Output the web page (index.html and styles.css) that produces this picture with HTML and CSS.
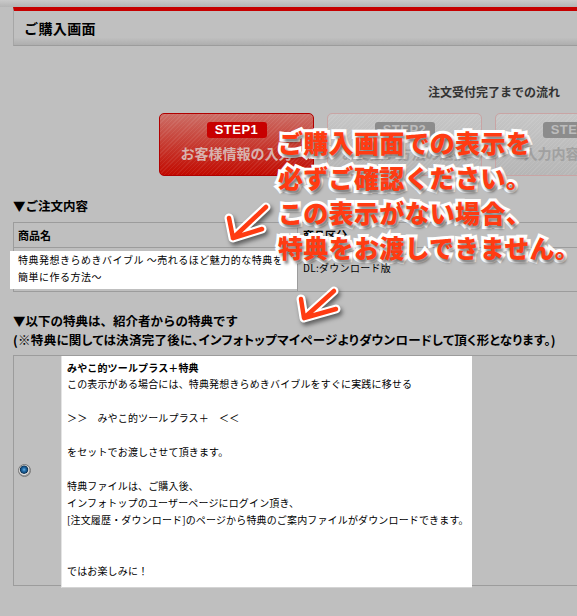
FILE: index.html
```html
<!DOCTYPE html>
<html lang="ja">
<head>
<meta charset="utf-8">
<title>ご購入画面</title>
<link rel="stylesheet" href="styles.css">
</head>
<body>
<div class="page">
  <div class="topbar"></div>
  <div class="main">
    <div class="header"><h1>ご購入画面</h1></div>
    <p class="flow-title">注文受付完了までの流れ</p>
    <div class="steps">
      <div class="step active"><span class="pill">STEP1</span><span class="label">お客様情報の入力</span></div>
      <div class="step"><span class="pill">STEP2</span><span class="label">お支払い方法の選択</span></div>
      <div class="step"><span class="pill">STEP3</span><span class="label">入力内容の確認</span></div>
    </div>

    <h2 class="sec sec-order">▼ご注文内容</h2>
    <div class="order">
      <div class="cell th">商品名</div>
      <div class="cell th th2">商品区分</div>
      <div class="cell name"><div class="name-box">特典発想きらめきバイブル ～売れるほど魅力的な特典を<br>簡単に作る方法～</div></div>
      <div class="cell kind">DL:ダウンロード版</div>
    </div>

    <h2 class="sec sec-bonus">▼以下の特典は、紹介者からの特典です<br><span class="sub">(※特典に関しては決済完了後に、インフォトップマイページよりダウンロードして頂く形となります。)</span></h2>
    <div class="bonus">
      <div class="radio-cell"><span class="radio"></span></div>
      <div class="bonus-box">
        <p class="bonus-title">みやこ的ツールプラス＋特典</p>
        <p class="bonus-text">この表示がある場合には、特典発想きらめきバイブルをすぐに実践に移せる<br><br>＞＞　みやこ的ツールプラス＋　＜＜<br><br>をセットでお渡しさせて頂きます。<br><br>特典ファイルは、ご購入後、<br>インフォトップのユーザーページにログイン頂き、<br>[注文履歴・ダウンロード]のページから特典のご案内ファイルがダウンロードできます。<br><br><br>ではお楽しみに！</p>
      </div>
      <div class="bonus-rest"></div>
    </div>
  </div>

  <div class="notice">ご購入画面での表示を<br>必ずご確認ください。<br>この表示がない場合、<br>特典をお渡しできません。</div>

  <svg class="arrows" width="577" height="616" viewBox="0 0 577 616">
    <path class="arrow-outline" d="M266 207 L233 238 M229 218 L233 238 L262 229"/>
    <path class="arrow-outline" d="M334 291 L304 318 M301 299 L304 318 L336 309"/>
    <path class="arrow-fill" d="M266 207 L233 238 M229 218 L233 238 L262 229"/>
    <path class="arrow-fill" d="M334 291 L304 318 M301 299 L304 318 L336 309"/>
  </svg>
</div>
</body>
</html>
```

FILE: styles.css
```css
* { box-sizing: border-box; margin: 0; padding: 0; }
html, body { overflow: hidden; }
body {
  background: #bfbfbf;
  font-family: "Noto Sans CJK JP", "Noto Sans", sans-serif;
  color: #000;
}
.page { position: relative; width: 577px; height: 616px; overflow: hidden; }

.topbar { height: 7px; background: linear-gradient(#cacaca, #b4b4b4); }
.main { padding-left: 13px; }

.header {
  height: 39px;
  border-top: 4px solid #c60000;
  border-left: 1px solid #a6a6a6;
  border-bottom: 1px solid #9c9c9c;
  background: linear-gradient(to bottom, #c0c0c0 0, #c0c0c0 78%, #aeaeae 100%);
}
.header h1 {
  font-size: 14px;
  font-weight: 700;
  line-height: 34px;
  padding-left: 10px;
  letter-spacing: 0.4px;
}

.flow-title {
  margin-top: 38px;
  font-size: 12px;
  font-weight: 700;
  line-height: 16px;
  color: #333;
  text-align: right;
  padding-right: 17px;
}

.steps { display: flex; gap: 13px; margin-top: 13px; padding-left: 146px; }
.step {
  flex: 0 0 155px;
  height: 63px;
  border-radius: 5px;
  border: 1px solid #c9a4a4;
  display: flex;
  flex-direction: column;
  align-items: center;
  background:
    repeating-linear-gradient(-45deg, rgba(255,255,255,0.08) 0 1px, transparent 1px 3px),
    linear-gradient(#c6c6c6, #b6b6b6);
}
.step .pill {
  margin-top: 8px;
  width: 60px;
  height: 16px;
  border-radius: 3px;
  background: #8c8c8c;
  color: #bdbdbd;
  font-family: "Liberation Sans", Arial, sans-serif;
  font-weight: 700;
  font-size: 13px;
  line-height: 16px;
  text-align: center;
  letter-spacing: 0.5px;
}
.step .label {
  margin-top: 6px;
  font-size: 14px;
  font-weight: 700;
  line-height: 18px;
  color: #a0a0a0;
  white-space: nowrap;
}
.step.active {
  border-color: #b00000;
  background:
    repeating-linear-gradient(-45deg, rgba(255,255,255,0.07) 0 1px, transparent 1px 3px),
    linear-gradient(#cc6e66 0%, #c6362c 55%, #c20a00 100%);
}
.step.active .pill { background: #c80000; color: #fff; }
.step.active .label { color: #d8b2ae; }

.sec { font-size: 12.5px; font-weight: 700; line-height: 16px; }
.sec-order { margin-top: 22px; }
.sec-bonus { margin-top: 19px; line-height: 19px; }
.sec-bonus .sub { font-feature-settings: "palt"; letter-spacing: 0.3px; }

.order {
  margin-top: 8px;
  display: grid;
  grid-template-columns: 284px 1fr;
  border-top: 1px solid #9c9c9c;
  border-left: 1px solid #9c9c9c;
}
.cell { border-bottom: 1px solid #9c9c9c; }
.cell.th, .cell.name { border-right: 1px solid #9c9c9c; }
.cell.th2 { border-right: 0; }
.cell.th {
  height: 25px;
  font-size: 11px;
  font-weight: 700;
  line-height: 24px;
  padding-left: 4px;
}
.cell.th2 { padding-left: 5px; }
.name-box {
  margin: 3px 0 2px -4px;
  background: #fff;
  padding: 0 4px 4px 8px;
  font-size: 10px;
  line-height: 17px;
  letter-spacing: 0.5px;
  white-space: nowrap;
}
.cell.kind {
  display: flex;
  align-items: center;
  padding: 0 0 4px 5px;
  font-size: 10px;
  letter-spacing: 0.3px;
}

.bonus {
  margin-top: 6px;
  display: grid;
  grid-template-columns: 47px 411px 1fr;
  border-top: 1px solid #9c9c9c;
  border-left: 1px solid #9c9c9c;
  border-bottom: 1px solid #9c9c9c;
}
.radio-cell { display: flex; align-items: center; padding-left: 4px; }
.radio {
  width: 13px;
  height: 13px;
  border-radius: 50%;
  border: 1px solid #7a7a7a;
  background: radial-gradient(circle at 46% 42%, #6ab4e6 0, #2a72ad 1.6px, #0f4a7c 3.2px, #0a2e50 3.8px, #bdbdbd 4.3px, #e4e4e4 5px, #9a9a9a 5.6px);
}
.bonus-box {
  height: 232px;
  margin-bottom: -3px;
  background: #fff;
  border-left: 1px solid #e4e4e4;
  border-bottom: 1px solid #d4d4d4;
  padding: 4px 5px 9px 5px;
  font-size: 10px;
  letter-spacing: 0.15px;
  white-space: nowrap;
}
.bonus-title { font-weight: 700; line-height: 15px; }
.bonus-text { line-height: 17px; }

.notice {
  position: absolute;
  left: 278px;
  top: 125px;
  font-size: 25px;
  font-weight: 900;
  line-height: 35px;
  letter-spacing: 0.3px;
  color: #ff3b12;
  white-space: nowrap;
  -webkit-text-stroke: 6px #fff;
  paint-order: stroke fill;
  text-shadow: 2px 3px 3px rgba(0,0,0,0.55);
}

.arrows {
  position: absolute;
  left: 0;
  top: 0;
  filter: drop-shadow(2px 3px 2px rgba(0,0,0,0.5));
}
.arrow-outline { fill: none; stroke: #fff; stroke-width: 9; stroke-linecap: round; stroke-linejoin: round; }
.arrow-fill { fill: none; stroke: #ff3b12; stroke-width: 4.5; stroke-linecap: round; stroke-linejoin: round; }
```
